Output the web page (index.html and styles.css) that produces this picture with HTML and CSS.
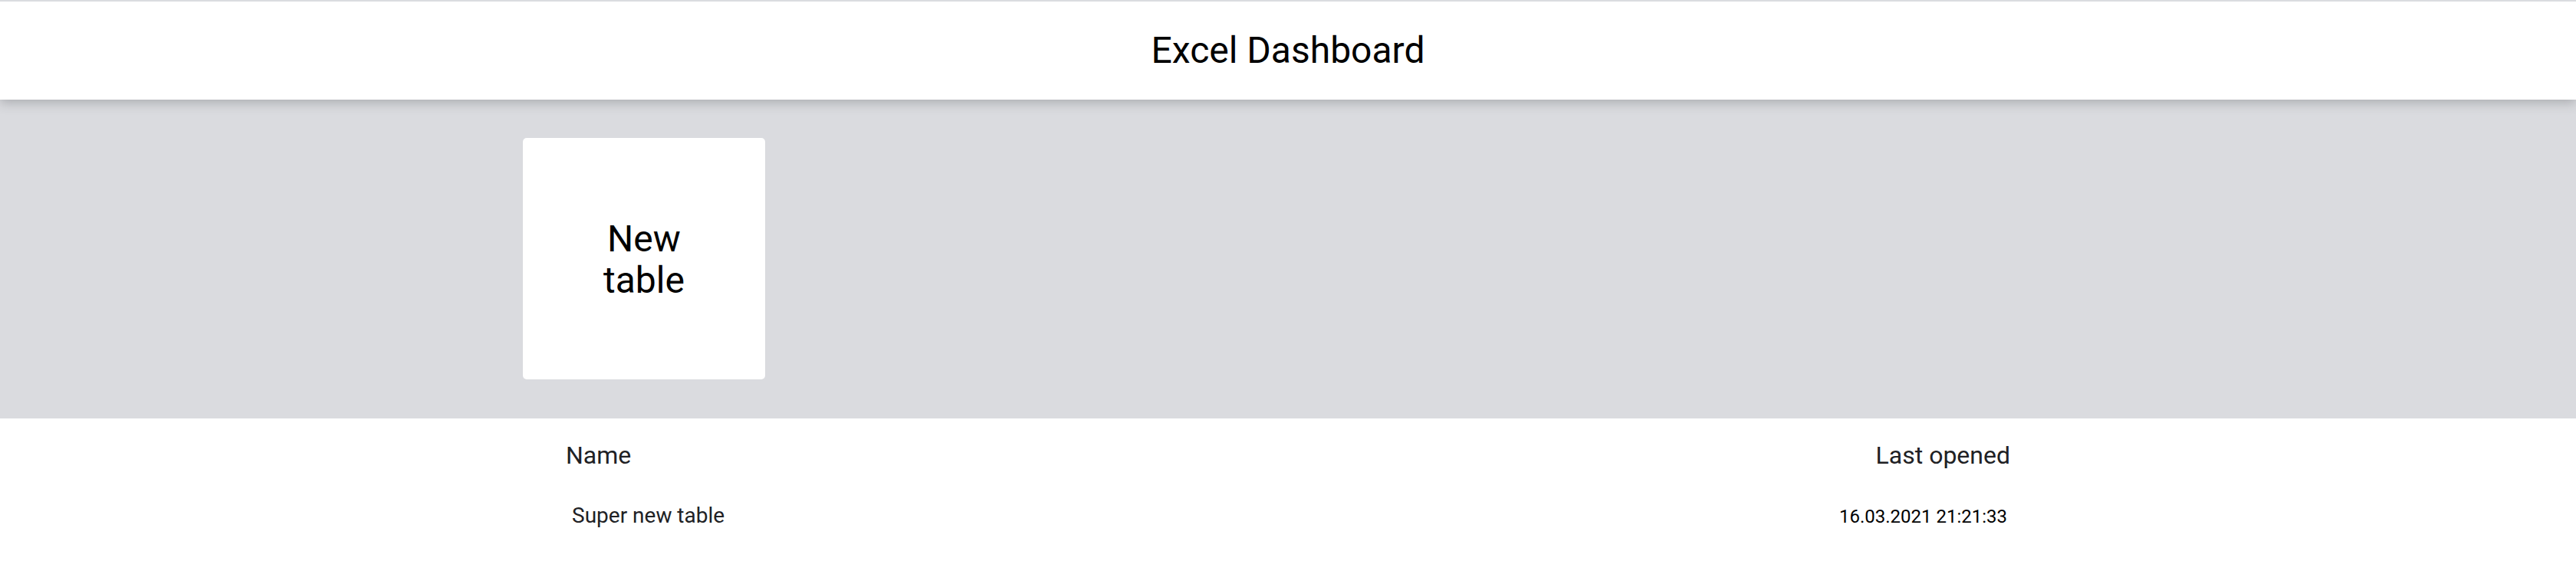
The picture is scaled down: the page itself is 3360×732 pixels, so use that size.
FILE: index.html
```html
<!DOCTYPE html>
<html>
<head>
<meta charset="utf-8">
<title>Excel Dashboard</title>
<link rel="stylesheet" href="styles.css">
</head>
<body>
<header class="header">
  <h1 class="title">Excel Dashboard</h1>
</header>
<section class="create">
  <div class="container">
    <div class="card">New<br>table</div>
  </div>
</section>
<section class="list">
  <div class="container list-inner">
    <div class="list-head">
      <span>Name</span>
      <span>Last opened</span>
    </div>
    <div class="list-row">
      <span class="row-name">Super new table</span>
      <span class="row-date">16.03.2021 21:21:33</span>
    </div>
  </div>
</section>
</body>
</html>
```

FILE: styles.css
```css
* { box-sizing: border-box; }
html, body {
  margin: 0;
  padding: 0;
  background: #fff;
  font-family: Roboto, "Liberation Sans", sans-serif;
  color: #000;
}
.header {
  position: relative;
  z-index: 2;
  height: 130px;
  border-top: 2px solid #dadce0;
  background: #fff;
  display: flex;
  align-items: center;
  justify-content: center;
  box-shadow: 0 4px 14px rgba(60, 64, 67, 0.3);
}
.title {
  margin: 0;
  font-size: 48px;
  font-weight: 400;
  line-height: 1;
}
.create {
  background: #dadbdf;
  padding: 50px 0 51px;
}
.container {
  width: 2016px;
  margin: 0 auto;
}
.create .container {
  padding-left: 10px;
}
.card {
  width: 316px;
  height: 315px;
  background: #fff;
  border-radius: 5px;
  display: flex;
  align-items: center;
  justify-content: center;
  text-align: center;
  font-size: 48px;
  line-height: 54px;
  padding-top: 2px;
}
.list-inner {
  padding: 0 66px;
}
.list-head {
  display: flex;
  justify-content: space-between;
  font-size: 32px;
  color: #202124;
  padding-top: 31px;
  line-height: 34px;
}
.list-row {
  display: flex;
  justify-content: space-between;
  align-items: baseline;
  padding: 47px 4px 0 8px;
  line-height: 30px;
}
.row-name {
  font-size: 28px;
  color: #202124;
}
.row-date {
  font-size: 24px;
  color: #000;
}
```
